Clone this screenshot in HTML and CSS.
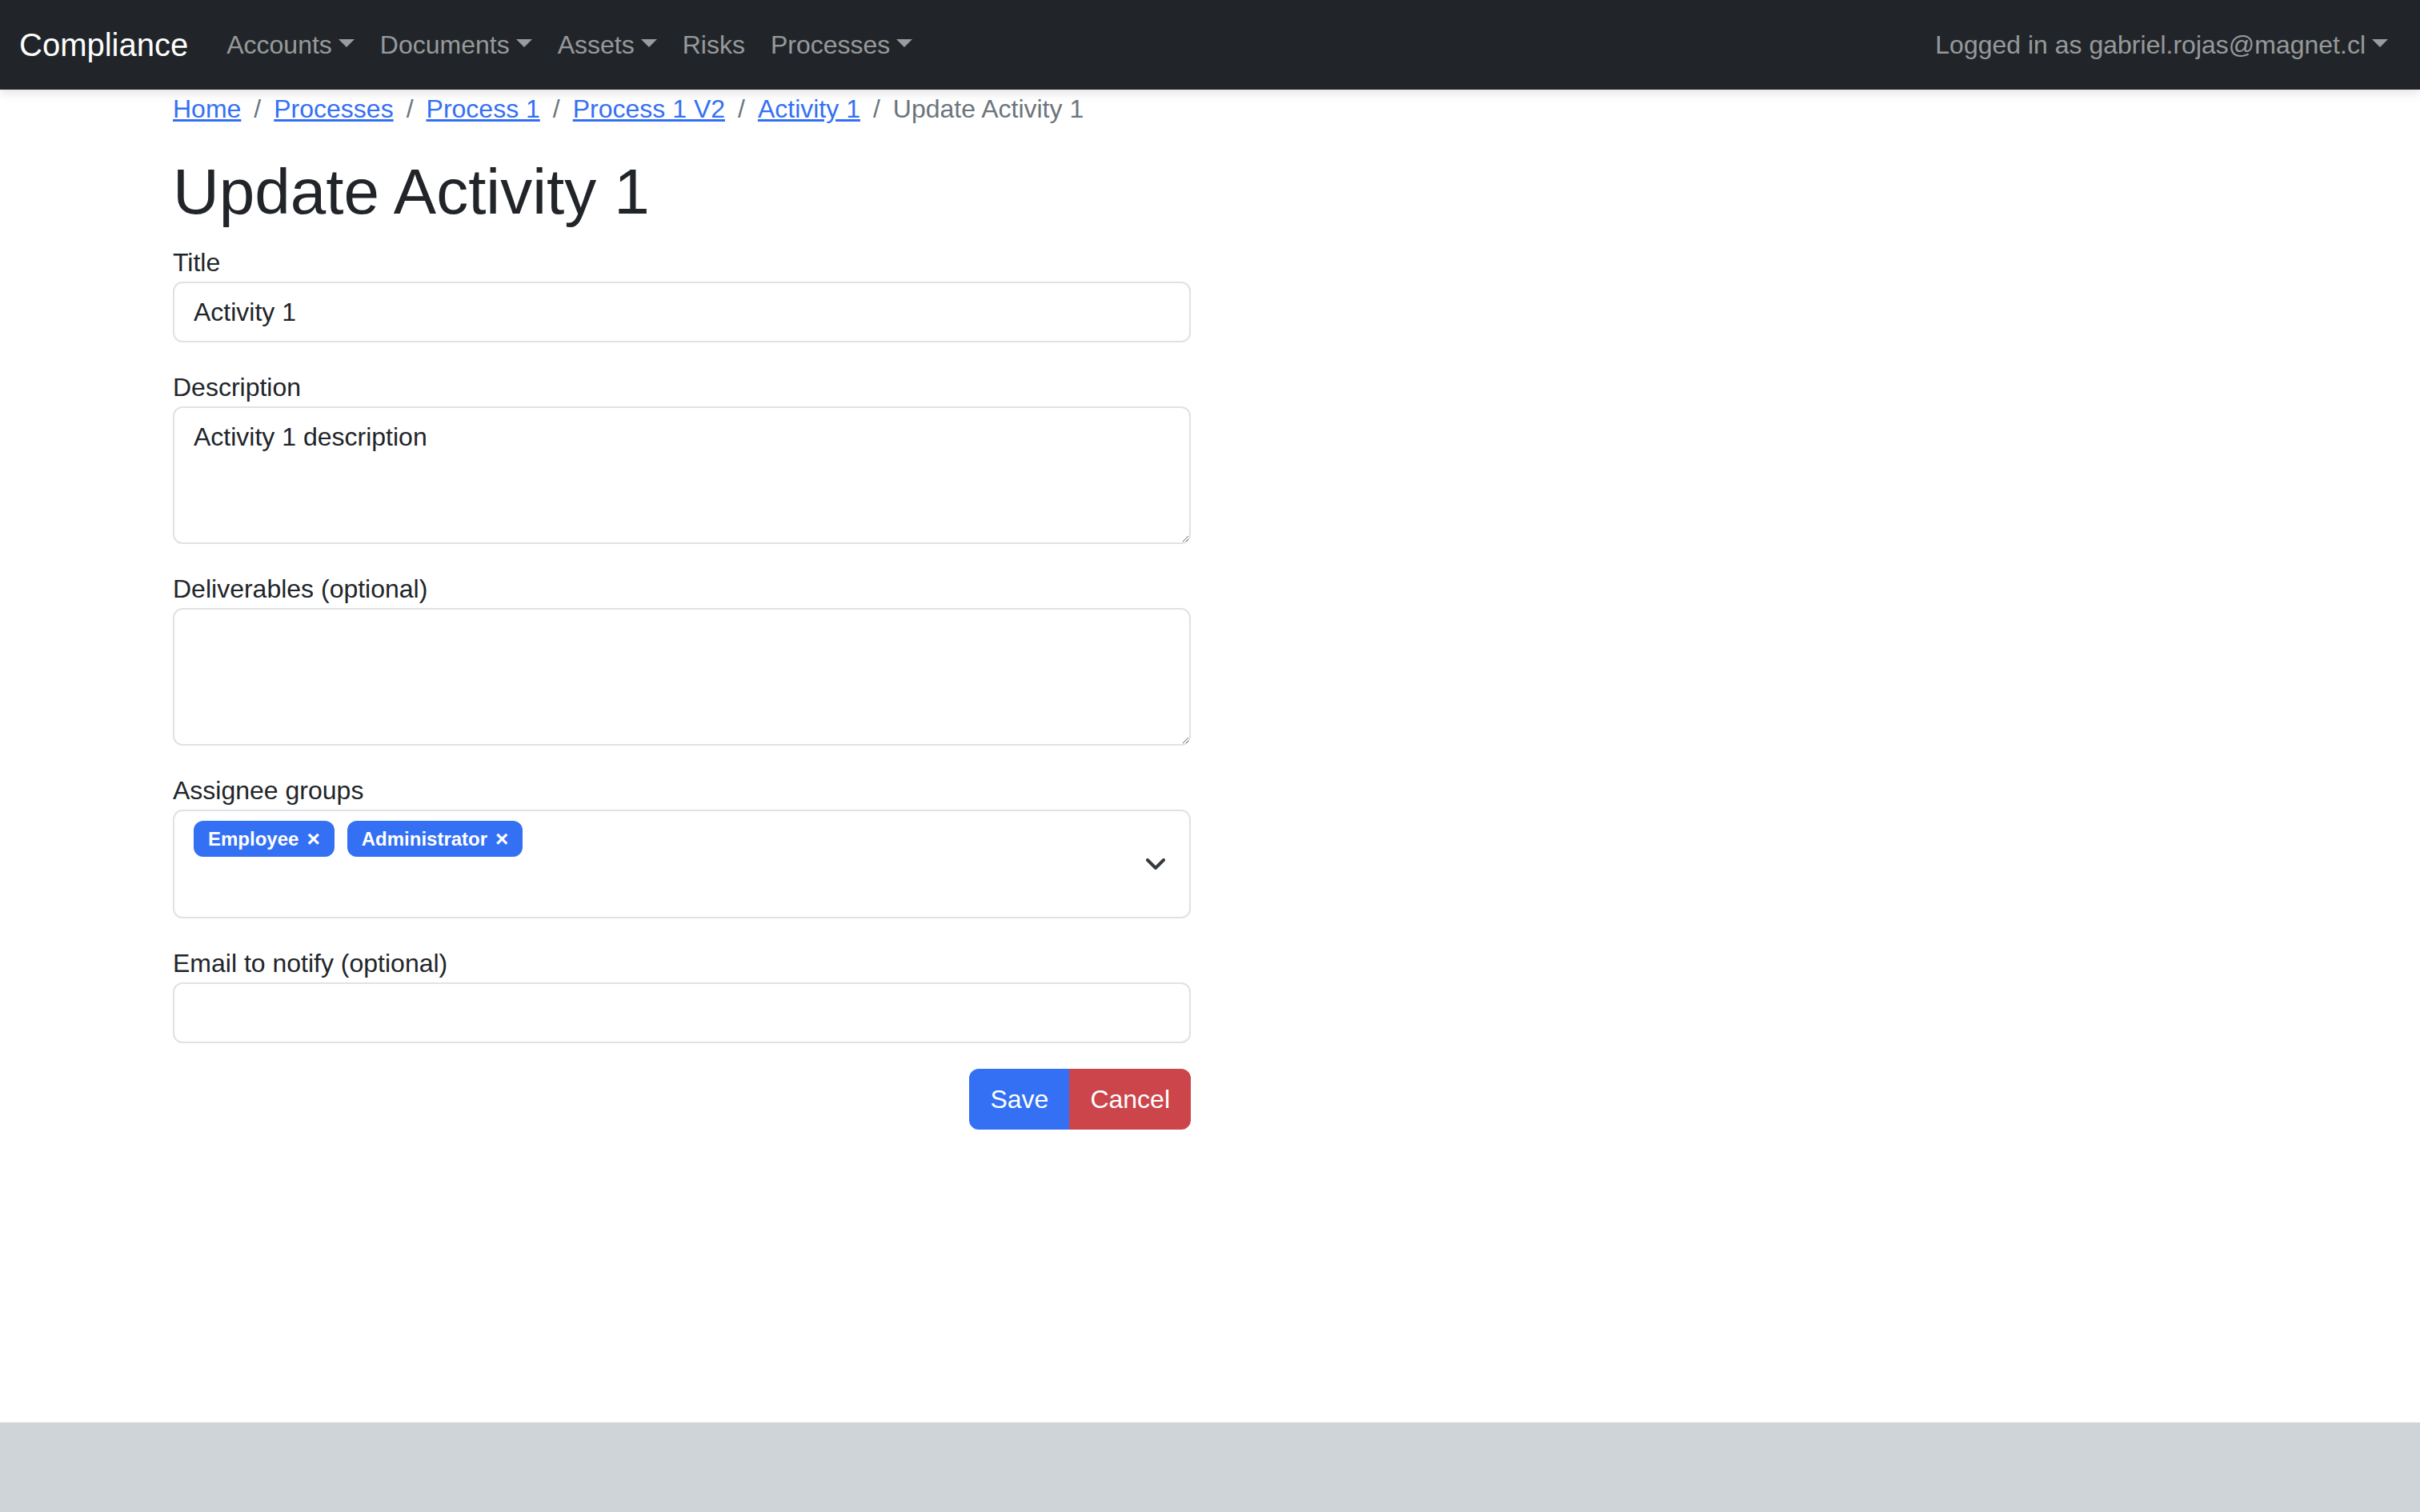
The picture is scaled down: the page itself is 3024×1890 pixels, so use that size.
FILE: index.html
```html
<!DOCTYPE html>
<html lang="en">
<head>
<meta charset="utf-8">
<title>Update Activity 1</title>
<link rel="stylesheet" href="styles.css">
</head>
<body>
<nav class="navbar">
  <a class="brand" href="#">Compliance</a>
  <ul class="nav">
    <li><a class="nav-link toggle" href="#">Accounts</a></li>
    <li><a class="nav-link toggle" href="#">Documents</a></li>
    <li><a class="nav-link toggle" href="#">Assets</a></li>
    <li><a class="nav-link" href="#">Risks</a></li>
    <li><a class="nav-link toggle" href="#">Processes</a></li>
  </ul>
  <ul class="nav nav-right">
    <li><a class="nav-link toggle" href="#">Logged in as gabriel.rojas@magnet.cl</a></li>
  </ul>
</nav>

<main class="container">
  <ol class="breadcrumb">
    <li><a href="#">Home</a></li>
    <li><a href="#">Processes</a></li>
    <li><a href="#">Process 1</a></li>
    <li><a href="#">Process 1 V2</a></li>
    <li><a href="#">Activity 1</a></li>
    <li class="active">Update Activity 1</li>
  </ol>

  <div class="form-col">
    <h1 class="page-title">Update Activity 1</h1>
    <form class="form">
      <div class="field">
        <label for="title">Title</label>
        <input id="title" class="control" type="text" value="Activity 1">
      </div>
      <div class="field">
        <label for="description">Description</label>
        <textarea id="description" class="control" rows="3">Activity 1 description</textarea>
      </div>
      <div class="field">
        <label for="deliverables">Deliverables (optional)</label>
        <textarea id="deliverables" class="control" rows="3"></textarea>
      </div>
      <div class="field">
        <label>Assignee groups</label>
        <div class="multiselect">
          <div class="tags">
            <span class="tag">Employee <span class="tag-x">×</span></span>
            <span class="tag">Administrator <span class="tag-x">×</span></span>
          </div>
          <svg class="chevron" width="24" height="14" viewBox="0 0 24 14"><polyline points="2,2 12,12 22,2" fill="none" stroke="#343a40" stroke-width="4" stroke-linecap="round" stroke-linejoin="round"/></svg>
        </div>
      </div>
      <div class="field">
        <label for="email">Email to notify (optional)</label>
        <input id="email" class="control" type="email">
      </div>
      <div class="actions">
        <button type="button" class="btn btn-save">Save</button><button type="button" class="btn btn-cancel">Cancel</button>
      </div>
    </form>
  </div>
</main>

<footer class="footer"></footer>
</body>
</html>
```

FILE: styles.css
```css
* { box-sizing: border-box; }

html, body { margin: 0; padding: 0; }

body {
  font-family: "Liberation Sans", Arial, sans-serif;
  font-size: 32px;
  line-height: 48px;
  color: #212529;
  background: #fff;
  min-height: 100vh;
  display: flex;
  flex-direction: column;
}

a { color: #3470f4; }

/* Navbar */
.navbar {
  position: relative;
  z-index: 2;
  display: flex;
  align-items: center;
  height: 112px;
  padding: 16px 24px;
  background: #212529;
  box-shadow: 0 4px 12px rgba(0, 0, 0, 0.12);
}

.brand {
  color: #fff;
  font-size: 40px;
  line-height: 60px;
  padding: 10px 0;
  margin-right: 32px;
  text-decoration: none;
}

.nav {
  display: flex;
  list-style: none;
  margin: 0;
  padding: 0;
}

.nav-right { margin-left: auto; }

.nav-link {
  display: block;
  padding: 16px;
  color: rgba(255, 255, 255, 0.55);
  text-decoration: none;
}

.toggle::after {
  content: "";
  display: inline-block;
  margin-left: 8px;
  vertical-align: 8px;
  border-top: 10px solid;
  border-left: 10px solid transparent;
  border-right: 10px solid transparent;
  border-bottom: 0;
}

/* Content */
.container {
  width: 100%;
  max-width: 2640px;
  margin: 0 auto;
  padding: 0 24px;
}

.breadcrumb {
  display: flex;
  flex-wrap: wrap;
  list-style: none;
  margin: 0 0 32px;
  padding: 0;
}

.breadcrumb li + li::before {
  content: "/";
  color: #6c757d;
  padding: 0 16px;
}

.breadcrumb .active { color: #6c757d; }

.form-col { width: 1272px; }

.page-title {
  font-size: 80px;
  font-weight: 500;
  line-height: 96px;
  margin: 0 0 16px;
}

.field { margin-bottom: 32px; }

.field label { display: inline-block; }

.control {
  display: block;
  width: 100%;
  padding: 12px 24px;
  font: inherit;
  line-height: 48px;
  color: #212529;
  background: #fff;
  border: 2px solid #dee2e6;
  border-radius: 12px;
  outline: none;
}

textarea.control { resize: vertical; min-height: 172px; }

.multiselect {
  display: flex;
  align-items: center;
  height: 136px;
  padding: 12px 30px 12px 24px;
  border: 2px solid #dee2e6;
  border-radius: 12px;
}

.tags {
  flex: 1;
  align-self: flex-start;
  display: flex;
  gap: 16px;
}

.tag {
  display: inline-flex;
  align-items: center;
  height: 45px;
  padding: 0 18px;
  gap: 10px;
  font-size: 24px;
  font-weight: 700;
  line-height: 1;
  color: #fff;
  background: #3470f4;
  border-radius: 12px;
}

.tag-x { font-size: 28px; }

.chevron { display: block; flex: none; }

.actions {
  display: flex;
  justify-content: flex-end;
}

.btn {
  font: inherit;
  line-height: 48px;
  padding: 12px 24px;
  color: #fff;
  border: 2px solid transparent;
  cursor: pointer;
}

.btn-save {
  background: #3470f4;
  border-color: #3470f4;
  border-radius: 12px 0 0 12px;
}

.btn-cancel {
  background: #cb454b;
  border-color: #cb454b;
  border-radius: 0 12px 12px 0;
}

.footer {
  margin-top: auto;
  height: 112px;
  background: #cfd4d8;
}
```
